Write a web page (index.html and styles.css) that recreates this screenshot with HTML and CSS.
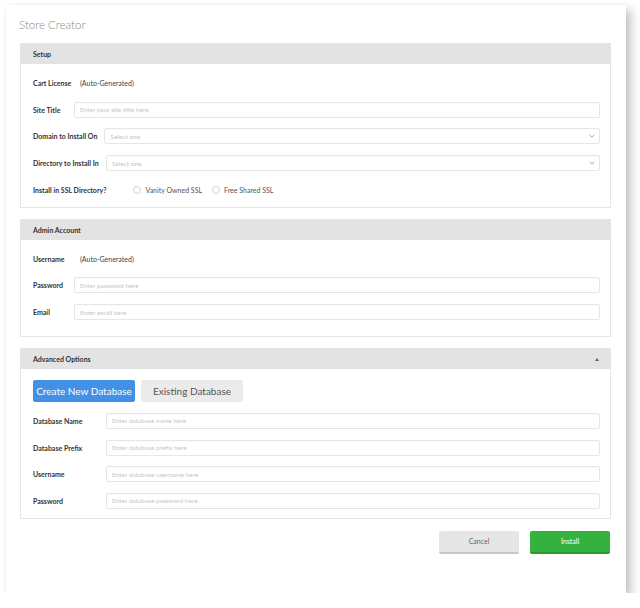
FILE: index.html
```html
<!DOCTYPE html>
<html>
  <head>
    <meta charset="utf-8" />
    <meta name="viewport" content="width=device-width, initial-scale=1" />
    <title>Store Creator</title>
    <link rel="stylesheet" href="styles.css">
  </head>

  <body>
    <div class="card">
      <h1 class="card-title">Store Creator</h1>

      <!-- Setup panel -->
      <section class="panel">
        <div class="panel-head">Setup</div>
        <div class="panel-body">
          <div class="row row-static">
            <label class="field-label">Cart License</label>
            <span class="field-value">(Auto-Generated)</span>
          </div>
          <div class="row">
            <label class="field-label" for="siteTitle">Site Title</label>
            <input class="field" type="text" id="siteTitle" placeholder="Enter your site title here" />
          </div>
          <div class="row">
            <label class="field-label" for="domain">Domain to Install On</label>
            <div class="select-wrap">
              <select class="field" id="domain">
                <option value="" selected disabled>Select one</option>
              </select>
              <svg class="chevron" width="6" height="4" viewBox="0 0 6 4"><path d="M0.5 0.8 L3 3.2 L5.5 0.8" fill="none" stroke="#9a9a9a" stroke-width="0.9"/></svg>
            </div>
          </div>
          <div class="row">
            <label class="field-label" for="directory">Directory to Install In</label>
            <div class="select-wrap">
              <select class="field" id="directory">
                <option value="" selected disabled>Select one</option>
              </select>
              <svg class="chevron" width="6" height="4" viewBox="0 0 6 4"><path d="M0.5 0.8 L3 3.2 L5.5 0.8" fill="none" stroke="#9a9a9a" stroke-width="0.9"/></svg>
            </div>
          </div>
          <div class="row">
            <label class="field-label">Install in SSL Directory?</label>
            <div class="radio-group">
              <label class="radio"><span class="radio-dot"></span>Vanity Owned SSL</label>
              <label class="radio"><span class="radio-dot"></span>Free Shared SSL</label>
            </div>
          </div>
        </div>
      </section>

      <!-- Admin account panel -->
      <section class="panel">
        <div class="panel-head">Admin Account</div>
        <div class="panel-body panel-body-loose">
          <div class="row row-static">
            <label class="field-label">Username</label>
            <span class="field-value">(Auto-Generated)</span>
          </div>
          <div class="row">
            <label class="field-label" for="adminPass">Password</label>
            <input class="field" type="password" id="adminPass" placeholder="Enter password here" />
          </div>
          <div class="row">
            <label class="field-label" for="adminEmail">Email</label>
            <input class="field" type="text" id="adminEmail" placeholder="Enter email here" />
          </div>
        </div>
      </section>

      <!-- Advanced options panel (expanded) -->
      <section class="panel">
        <div class="panel-head">
          Advanced Options
          <span class="caret-up"></span>
        </div>
        <div class="panel-body panel-body-wide">
          <div class="tabs">
            <button class="tab tab-active" type="button">Create New Database</button>
            <button class="tab" type="button">Existing Database</button>
          </div>
          <div class="row">
            <label class="field-label" for="dbName">Database Name</label>
            <input class="field" type="text" id="dbName" placeholder="Enter database name here" />
          </div>
          <div class="row">
            <label class="field-label" for="dbPrefix">Database Prefix</label>
            <input class="field" type="text" id="dbPrefix" placeholder="Enter database prefix here" />
          </div>
          <div class="row">
            <label class="field-label" for="dbUser">Username</label>
            <input class="field" type="text" id="dbUser" placeholder="Enter database username here" />
          </div>
          <div class="row">
            <label class="field-label" for="dbPass">Password</label>
            <input class="field" type="password" id="dbPass" placeholder="Enter database password here" />
          </div>
        </div>
      </section>

      <div class="actions">
        <button class="btn btn-cancel" type="button">Cancel</button>
        <button class="btn btn-install" type="button">Install</button>
      </div>
    </div>
  </body>
</html>
```

FILE: styles.css
```css
* {
  box-sizing: border-box;
  margin: 0;
  padding: 0;
}

body {
  font-family: 'Lato', 'Open Sans', sans-serif;
  background-color: #ffffff;
  color: #333333;
}

/* Outer white card with soft drop shadow */
.card {
  width: 620px;
  height: 588px;
  margin: 5px 0 0 6px;
  background-color: #ffffff;
  box-shadow: 0 0 2px rgba(0, 0, 0, 0.06), 5px 5px 9px rgba(0, 0, 0, 0.24);
}

.card-title {
  font-weight: 300;
  font-size: 11.5px;
  line-height: 14px;
  color: #8a8a8a;
  padding: 13px 13px 0;
  margin-bottom: 11px;
}

/* Collapsible panels */
.panel {
  margin: 0 15px 11px 14px;
  border: 1px solid #e6e6e6;
}

.panel-head {
  position: relative;
  height: 20px;
  line-height: 20px;
  padding: 0 12px;
  background-color: #e3e3e3;
  font-size: 7px;
  font-weight: 700;
  color: #333333;
}

.caret-up {
  position: absolute;
  right: 11px;
  top: 9px;
  width: 0;
  height: 0;
  border-left: 2.5px solid transparent;
  border-right: 2.5px solid transparent;
  border-bottom: 3px solid #666666;
}

.panel-body {
  display: flex;
  flex-direction: column;
  gap: 10.7px;
  padding: 11px 10px 9px 12px;
}

.panel-body-loose {
  padding-bottom: 16px;
}

/* Form rows */
.row {
  display: flex;
  align-items: center;
  height: 16px;
}

.field-label {
  flex: 0 0 auto;
  min-width: 41px;
  padding-right: 7px;
  font-size: 7px;
  font-weight: 700;
  color: #333333;
  white-space: nowrap;
}

/* read-only rows keep the value on the input column */
.row-static .field-label {
  width: 41px;
  padding-right: 0;
}

.panel-body-wide .field-label {
  min-width: 73px;
}

.field-value {
  padding-left: 6px;
  font-size: 7px;
  color: #444444;
}

.field {
  flex: 1;
  width: 100%;
  height: 16px;
  padding: 0 5px;
  font-family: 'Lato', 'Open Sans', sans-serif;
  font-size: 6.5px;
  color: #333333;
  background-color: #ffffff;
  border: 1px solid #e6e6e6;
  border-radius: 2px;
  box-shadow: inset 0 1px 1px rgba(0, 0, 0, 0.02);
  outline: none;
}

.field::placeholder {
  color: #c6c6c6;
}

select.field {
  appearance: none;
  -webkit-appearance: none;
  color: #c6c6c6;
}

.select-wrap {
  position: relative;
  flex: 1;
  display: flex;
}

.chevron {
  position: absolute;
  right: 5px;
  top: 6px;
}

/* Radio options */
.radio-group {
  display: flex;
  gap: 10px;
  margin-left: 20px;
}

.radio {
  display: flex;
  align-items: center;
  gap: 4px;
  font-size: 7px;
  color: #555555;
}

.radio-dot {
  width: 8px;
  height: 8px;
  border: 1px solid #d2d2d2;
  border-radius: 50%;
  background-color: #ffffff;
}

/* Database tabs */
.tabs {
  display: flex;
  gap: 6px;
}

.tab {
  width: 102px;
  height: 22px;
  border: none;
  border-radius: 2px;
  font-family: 'Lato', 'Open Sans', sans-serif;
  font-size: 10px;
  background-color: #ebebeb;
  color: #555555;
}

.tab-active {
  background-color: #4291e6;
  color: #ffffff;
}

/* Footer buttons */
.actions {
  display: flex;
  justify-content: flex-end;
  gap: 11px;
  padding-top: 1px;
  padding-right: 16px;
}

.btn {
  width: 80px;
  height: 23px;
  border: none;
  border-radius: 2px;
  font-family: 'Lato', 'Open Sans', sans-serif;
  font-size: 7px;
}

.btn-cancel {
  background-color: #e6e6e6;
  border-bottom: 2px solid #c8c8c8;
  color: #666666;
}

.btn-install {
  background-color: #34b23f;
  border-bottom: 2px solid #2b9a35;
  color: #ffffff;
}
```
